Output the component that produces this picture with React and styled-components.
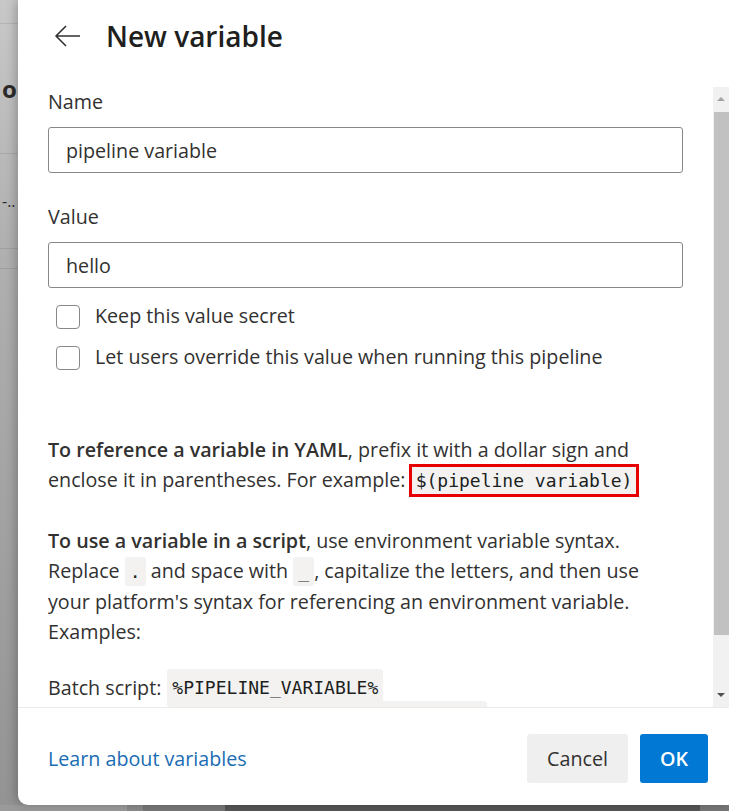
import styled, { createGlobalStyle } from "styled-components";

const GlobalStyle = createGlobalStyle`
  html, body {
    margin: 0;
    padding: 0;
  }
  body {
    background: #8c8c8c;
    font-family: "Open Sans", "Noto Sans", sans-serif;
  }
`;

const Page = styled.div`
  position: relative;
  width: 729px;
  height: 811px;
  overflow: hidden;
  display: flex;
  flex-direction: column;
  background: linear-gradient(180deg, #c8c8c8 0%, #b0b0b0 30%, #939393 100%);
`;

const BackRow = styled.div`
  height: ${(p) => p.$h}px;
  box-sizing: border-box;
  border-bottom: 1px solid rgba(0, 0, 0, 0.09);
  display: flex;
  align-items: center;
  font-size: ${(p) => (p.$bold ? 24 : 16)}px;
  font-weight: ${(p) => (p.$bold ? 700 : 400)};
  color: #2a2a2a;
  padding-left: 2px;
`;

const BackBottom = styled.div`
  margin-top: auto;
  height: 6px;
  background: linear-gradient(
    90deg,
    #9a9a9a 0 127px,
    #8a8a8a 127px 143px,
    #777 143px 225px,
    #555 225px 700px,
    #777 700px
  );
`;

const Panel = styled.section`
  position: absolute;
  top: 0;
  left: 18px;
  right: 0;
  height: 805px;
  background: #fff;
  border-bottom-left-radius: 10px;
  box-shadow: -3px 0 10px rgba(0, 0, 0, 0.22);
  display: flex;
  flex-direction: column;
  color: #323130;
`;

const Header = styled.header`
  height: 87px;
  box-sizing: border-box;
  padding: 0 0 15px 37px;
  display: flex;
  align-items: center;
  gap: 25px;
  flex-shrink: 0;
`;

const BackButton = styled.button`
  border: 0;
  background: none;
  padding: 0;
  width: 26px;
  height: 26px;
  display: flex;
  align-items: center;
  justify-content: center;
  color: #323130;
`;

const Title = styled.h1`
  margin: 0;
  font-size: 28px;
  font-weight: 600;
  color: #201f1e;
`;

const Body = styled.div`
  height: 620px;
  display: flex;
  flex-shrink: 0;
`;

const Content = styled.div`
  flex: 1;
  overflow: hidden;
  padding: 0 30px;
  font-size: 19.7px;
`;

const Label = styled.label`
  display: block;
  line-height: 28px;
  margin: ${(p) => (p.$first ? "1px" : "30px")} 0 11px;
  color: #323130;
`;

const TextInput = styled.input`
  display: block;
  width: 100%;
  box-sizing: border-box;
  height: 46px;
  border: 1px solid #8a8886;
  border-radius: 3px;
  padding: 0 17px;
  font: inherit;
  color: #323130;
  background: #fff;
  outline: none;
`;

const Options = styled.div`
  margin-top: 7px;
  padding-left: 8px;
`;

const Option = styled.div`
  height: 41px;
  display: flex;
  align-items: center;
  gap: 15px;
`;

const Box = styled.span`
  width: 24px;
  height: 24px;
  box-sizing: border-box;
  border: 1px solid #8a8886;
  border-radius: 4px;
  margin-top: 2px;
`;

const Para = styled.p`
  margin: ${(p) => p.$top}px 0 0;
  line-height: 30px;
`;

const Strong = styled.strong`
  font-weight: 600;
`;

const Code = styled.code`
  font-family: "DejaVu Sans Mono", "Liberation Mono", monospace;
  font-size: 18px;
  background: #f3f2f1;
  padding: 4px 5px;
  border-radius: ${(p) => (p.$marked ? 0 : 3)}px;
  outline: ${(p) => (p.$marked ? "3px solid #e60000" : "none")};
  outline-offset: ${(p) => (p.$marked ? "-1px" : "0")};
  color: #201f1e;
`;

const ScriptLine = styled.span`
  display: flex;
  height: 32px;
  align-items: center;
  gap: 6px;
`;

const Scrollbar = styled.div`
  width: 16px;
  background: #f1f1f1;
  display: flex;
  flex-direction: column;
  align-items: center;
`;

const Arrow = styled.span`
  height: 24px;
  display: flex;
  align-items: center;
  justify-content: center;
  &::before {
    content: "";
    border-left: 4px solid transparent;
    border-right: 4px solid transparent;
    ${(p) =>
      p.$down
        ? "border-top: 4px solid #505050;"
        : "border-bottom: 4px solid #a3a3a3;"}
  }
`;

const Thumb = styled.span`
  width: 15px;
  margin: 1px 0 0 1px;
  height: 523px;
  background: #c1c1c1;
`;

const Spacer = styled.span`
  flex: 1;
`;

const Footer = styled.footer`
  height: 98px;
  box-sizing: border-box;
  border-top: 1px solid #edebe9;
  padding: 4px 21px 0 30px;
  display: flex;
  align-items: center;
  justify-content: space-between;
  flex-shrink: 0;
`;

const Link = styled.a`
  color: #1a6cb3;
  font-size: 19.7px;
  text-decoration: none;
`;

const Actions = styled.div`
  display: flex;
  gap: 12px;
`;

const Button = styled.button`
  height: 49px;
  padding: 0 20px;
  border: 0;
  border-radius: 3px;
  font-family: inherit;
  font-size: 19.7px;
  font-weight: ${(p) => (p.$primary ? 600 : 400)};
  background: ${(p) => (p.$primary ? "#0078d4" : "#efefef")};
  color: ${(p) => (p.$primary ? "#fff" : "#323130")};
`;

export default function App() {
  return (
    <Page>
      <GlobalStyle />
      <BackRow $h={24} />
      <BackRow $h={130} $bold>
        o
      </BackRow>
      <BackRow $h={95}>-..</BackRow>
      <BackRow $h={20} />
      <BackBottom />

      <Panel>
        <Header>
          <BackButton aria-label="Back">
            <svg width="26" height="22" viewBox="0 0 26 22" fill="none">
              <path
                d="M1 11H25M11 1L1 11L11 21"
                stroke="currentColor"
                strokeWidth="1.6"
                strokeLinejoin="round"
              />
            </svg>
          </BackButton>
          <Title>New variable</Title>
        </Header>

        <Body>
          <Content>
            <Label $first>Name</Label>
            <TextInput readOnly value="pipeline variable" />
            <Label>Value</Label>
            <TextInput readOnly value="hello" />
            <Options>
              <Option>
                <Box />
                Keep this value secret
              </Option>
              <Option>
                <Box />
                Let users override this value when running this pipeline
              </Option>
            </Options>

            <Para $top={58}>
              <Strong>To reference a variable in YAML</Strong>, prefix it with a
              dollar sign and
              <br />
              enclose it in parentheses. For example:{" "}
              <Code $marked>$(pipeline variable)</Code>
            </Para>

            <Para $top={30}>
              <Strong>To use a variable in a script</Strong>, use environment
              variable syntax.
              <br />
              Replace <Code>.</Code> and space with <Code>_</Code>, capitalize
              the letters, and then use
              <br />
              your platform's syntax for referencing an environment variable.
              <br />
              Examples:
            </Para>

            <Para $top={25}>
              <ScriptLine>
                Batch script: <Code>%PIPELINE_VARIABLE%</Code>
              </ScriptLine>
              <ScriptLine>
                PowerShell script: <Code>{"${env:PIPELINE_VARIABLE}"}</Code>
              </ScriptLine>
            </Para>
          </Content>
          <Scrollbar>
            <Arrow />
            <Thumb />
            <Spacer />
            <Arrow $down />
          </Scrollbar>
        </Body>

        <Footer>
          <Link href="#">Learn about variables</Link>
          <Actions>
            <Button>Cancel</Button>
            <Button $primary>OK</Button>
          </Actions>
        </Footer>
      </Panel>
    </Page>
  );
}
